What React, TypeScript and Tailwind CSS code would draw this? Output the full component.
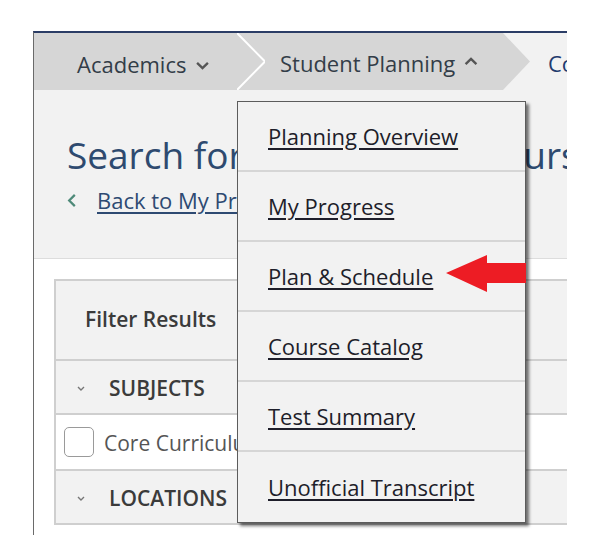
import React from 'react';

const menuItems = [
  'Planning Overview',
  'My Progress',
  'Plan & Schedule',
  'Course Catalog',
  'Test Summary',
  'Unofficial Transcript',
];

function ChevronDown({ className }: { className?: string }) {
  return (
    <svg viewBox="0 0 16 10" className={className} fill="none" stroke="currentColor" strokeWidth="2.6">
      <polyline points="2,2 8,8 14,2" />
    </svg>
  );
}

function ChevronUp({ className }: { className?: string }) {
  return (
    <svg viewBox="0 0 16 10" className={className} fill="none" stroke="currentColor" strokeWidth="2.6">
      <polyline points="2,8 8,2 14,8" />
    </svg>
  );
}

function FilterRow({ label }: { label: string }) {
  return (
    <div className="flex h-[54px] items-center border-b-2 border-[#cfcfcf] bg-[#f2f2f2] pt-[3px]">
      <svg viewBox="0 0 8 5" className="ml-[21px] h-[5px] w-[8px] text-[#777]" fill="none" stroke="currentColor" strokeWidth="1.4">
        <polyline points="1,1 4,4 7,1" />
      </svg>
      <span className="ml-[24px] text-[21px] font-semibold text-[#3b3b3b]">{label}</span>
    </div>
  );
}

export default function App() {
  return (
    <div className="min-h-[535px] w-[595px] bg-white pl-[33px] pt-[31px] font-['Open_Sans',sans-serif]">
      <div className="relative h-[504px] w-[534px] overflow-hidden border-l border-t-2 border-l-[#6a6a6a] border-t-[#2b3d66] bg-white">
        {/* top navigation */}
        <nav className="flex h-[57px] items-stretch whitespace-nowrap bg-[#f2f2f2] text-[22px] text-[#333d48]">
          <div className="flex w-[203px] shrink-0 items-center bg-[#d6d6d6] pl-[43px] pt-[5px]">
            Academics
            <ChevronDown className="ml-[9px] mt-[3px] h-[9px] w-[15px] text-[#555]" />
          </div>
          <svg viewBox="0 0 28 57" className="h-[57px] w-[28px] shrink-0" preserveAspectRatio="none">
            <rect width="28" height="57" fill="#d6d6d6" />
            <polyline points="0,0 28,28.5 0,57" fill="none" stroke="#ffffff" strokeWidth="2" />
          </svg>
          <div className="flex w-[238px] shrink-0 items-center bg-[#d6d6d6] pl-[15px] pt-[3px]">
            Student Planning
            <ChevronUp className="ml-[8px] mb-[3px] h-[9px] w-[16px] text-[#555]" />
          </div>
          <svg viewBox="0 0 27 57" className="h-[57px] w-[27px] shrink-0" preserveAspectRatio="none">
            <polygon points="0,0 27,28.5 0,57" fill="#d6d6d6" />
          </svg>
          <div className="ml-[18px] flex items-center pt-[3px] text-[#1f3b6e]">Communication</div>
        </nav>

        {/* page header */}
        <div className="border-b border-[#dddddd] bg-[#f2f2f2] pb-[44px] pl-[33px] pt-[42px]">
          <h1 className="whitespace-nowrap text-[37px] leading-[46px] text-[#2e4a6f]">
            Search for Courses and Course Sections
          </h1>
          <div className="mt-[8px] flex items-center text-[22px] leading-[28px]">
            <svg viewBox="0 0 10 16" className="h-[15px] w-[10px] text-[#4e8a79]" fill="none" stroke="currentColor" strokeWidth="2.4">
              <polyline points="8,2 2,8 8,14" />
            </svg>
            <a className="ml-[20px] whitespace-nowrap text-[#2e4a72] underline underline-offset-[3px]">Back to My Progress</a>
          </div>
        </div>

        {/* filter panel */}
        <div className="pl-[20px] pt-[20px]">
          <div className="w-[560px] border-l-2 border-t-2 border-[#cfcfcf]">
            <div className="flex h-[80px] items-center border-b-2 border-[#cfcfcf] bg-[#f2f2f2] pl-[29px] text-[21px] font-semibold text-[#3b3b3b]">
              Filter Results
            </div>
            <FilterRow label="SUBJECTS" />
            <div className="flex h-[56px] items-center border-b-2 border-[#cfcfcf] bg-white">
              <span className="ml-[8px] h-[30px] w-[30px] shrink-0 rounded-[5px] border border-[#9a9a9a] bg-white" />
              <span className="ml-[10px] whitespace-nowrap pt-[3px] text-[21px] text-[#555]">Core Curriculum</span>
            </div>
            <FilterRow label="LOCATIONS" />
          </div>
        </div>

        {/* dropdown menu */}
        <div className="absolute left-[203px] top-[68px] w-[289px] border border-[#5c5c5c] bg-[#f2f2f2] shadow-[3px_3px_3px_rgba(0,0,0,0.55)]">
          {menuItems.map((item, i) => (
            <div
              key={item}
              className={`flex h-[70px] items-center pl-[30px] ${i < menuItems.length - 1 ? 'border-b-2 border-[#d6d6d6]' : ''}`}
            >
              <a className="whitespace-nowrap text-[22px] text-[#1e1e2a] underline underline-offset-[3px]">{item}</a>
            </div>
          ))}
        </div>

        {/* red arrow */}
        <svg viewBox="0 0 80 38" className="absolute left-[412px] top-[222px] h-[38px] w-[80px]">
          <polygon points="0,18 41,0 41,8 80,8 80,28 41,28 41,37" fill="#ed1c24" />
        </svg>
      </div>
    </div>
  );
}
